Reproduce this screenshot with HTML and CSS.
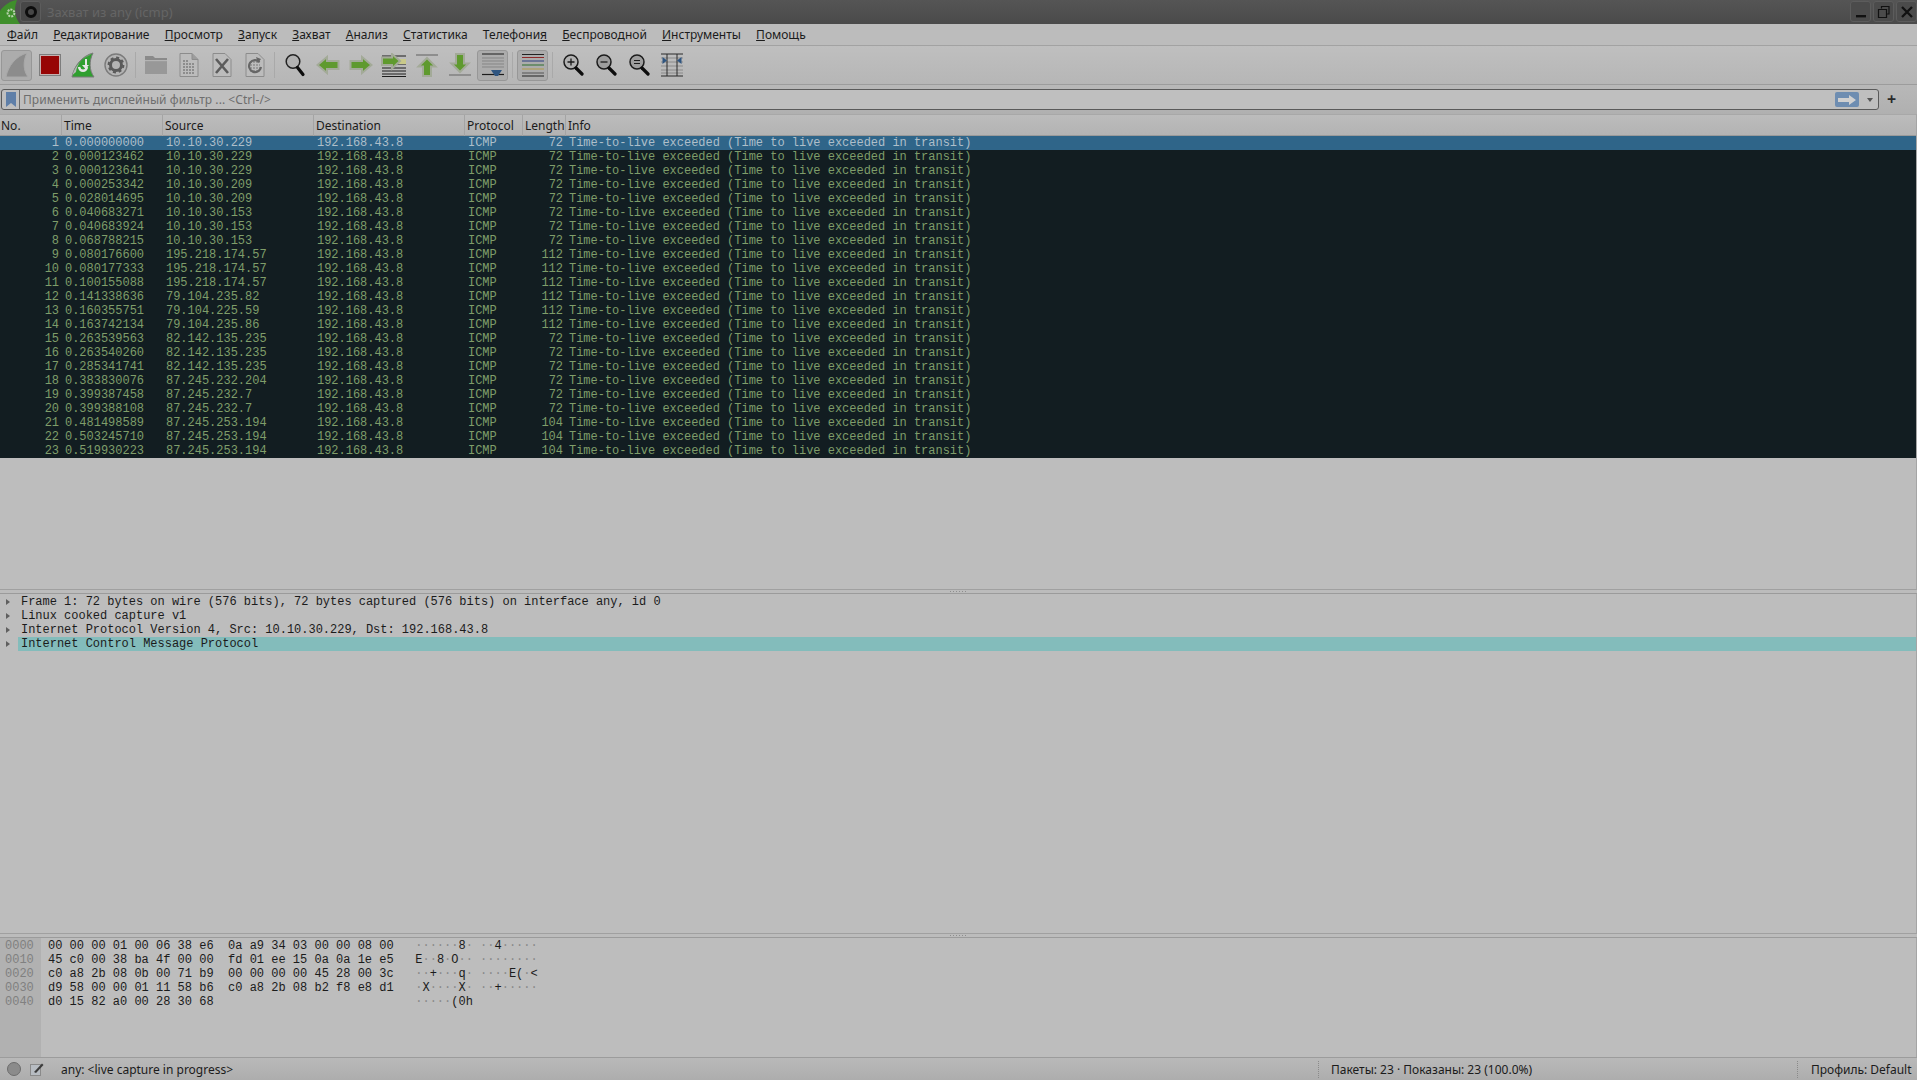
FILE: index.html
```html
<!DOCTYPE html>
<html lang="ru">
<head>
    <meta charset="UTF-8">
    <title>Захват из any (icmp)</title>
    <link rel="stylesheet" href="styles.css">
</head>
<body>
    <div class="titlebar">
        <svg class="app-logo" width="20" height="24" viewBox="0 0 20 24">
            <path d="M0 24V11C4 5 10 1 17 0C14 8 14 16 20 24Z" fill="#3f8f2c"/>
            <circle cx="11" cy="13" r="3.4" fill="none" stroke="#b9d3ae" stroke-width="2" stroke-dasharray="2 1"/>
        </svg>
        <div class="title-pin">
            <svg width="14" height="14" viewBox="0 0 14 14"><circle cx="7" cy="7" r="4.5" fill="none" stroke="#0d0d0d" stroke-width="3"/></svg>
        </div>
        <div class="title-text">Захват из any (icmp)</div>
        <div class="win-btn">
            <svg width="14" height="14" viewBox="0 0 14 14"><rect x="2" y="10" width="10" height="2.4" fill="#111"/></svg>
        </div>
        <div class="win-btn">
            <svg width="14" height="14" viewBox="0 0 14 14"><path d="M4.5 3.5V1.5H12V9H9.5M1.5 4.5H9.5V12.5H1.5Z" fill="none" stroke="#111" stroke-width="1.2"/></svg>
        </div>
        <div class="win-btn">
            <svg width="14" height="14" viewBox="0 0 14 14"><path d="M2 2L12 12M12 2L2 12" stroke="#111" stroke-width="2.3"/></svg>
        </div>
    </div>

    <div class="menubar">
        <span class="menu-item"><u>Ф</u>айл</span>
        <span class="menu-item"><u>Р</u>едактирование</span>
        <span class="menu-item"><u>П</u>росмотр</span>
        <span class="menu-item"><u>З</u>апуск</span>
        <span class="menu-item"><u>З</u>ахват</span>
        <span class="menu-item"><u>А</u>нализ</span>
        <span class="menu-item"><u>С</u>татистика</span>
        <span class="menu-item">Телефони<u>я</u></span>
        <span class="menu-item"><u>Б</u>еспроводной</span>
        <span class="menu-item"><u>И</u>нструменты</span>
        <span class="menu-item"><u>П</u>омощь</span>
    </div>

    <div class="toolbar">
        <div class="tool-btn on">
            <svg width="24" height="26" viewBox="0 0 24 26"><path d="M1 25C3 14 11 4 22 1C18 9 18 18 23 25Z" fill="#8c8c8c" stroke="#a9a9a9"/></svg>
        </div>
        <div class="tool-btn">
            <svg width="22" height="22" viewBox="0 0 22 22"><rect x="0.5" y="0.5" width="21" height="21" fill="#c4b0b0" stroke="#7d7d7d"/><rect x="2" y="2" width="18" height="18" fill="#970505"/></svg>
        </div>
        <div class="tool-btn">
            <svg width="24" height="26" viewBox="0 0 24 26">
                <path d="M1 25C3 14 11 4 22 1C18 9 18 18 23 25Z" fill="#2f9f2f" stroke="#7a7a7a"/>
                <path d="M1.500 23C4 14 11 6 21 2C12 5 6 12 5 20Z" fill="#b5b5b5"/>
                <path d="M8 15C9 20 15 20 16 15" fill="none" stroke="#e6e6e6" stroke-width="2.4"/>
                <path d="M14 7V13H11L14.5 17L18 13H16V7Z" fill="#e6e6e6"/>
            </svg>
        </div>
        <div class="tool-btn">
            <svg width="24" height="24" viewBox="0 0 24 24">
                <circle cx="12" cy="12" r="11" fill="#b4b4b4" stroke="#7b7b7b" stroke-width="1.4"/>
                <circle cx="12" cy="12" r="5.5" fill="none" stroke="#5a5a5a" stroke-width="3"/>
                <circle cx="12" cy="12" r="7.4" fill="none" stroke="#5a5a5a" stroke-width="2" stroke-dasharray="3 2.8"/>
            </svg>
        </div>
        <div class="tool-sep"></div>
        <div class="tool-btn">
            <svg width="24" height="20" viewBox="0 0 24 20">
                <path d="M1 3V1H9L11 3H23V19H1Z" fill="#8a8a8a"/>
                <rect x="1" y="5" width="22" height="14" fill="#989898"/>
                <rect x="1" y="5" width="22" height="1.2" fill="#b4b4b4"/>
            </svg>
        </div>
        <div class="tool-btn">
            <svg width="20" height="24" viewBox="0 0 20 24">
                <path d="M1 .5H13L19 6.500V23.500H1Z" fill="#bcbcbc" stroke="#8c8c8c"/>
                <path d="M13 .5V6.500H19" fill="#9c9c9c" stroke="#8c8c8c"/>
                <path d="M4 8H10M4 11H15M4 14H15M4 17H15M4 20H15" stroke="#7e7e7e" stroke-width="1.5" stroke-dasharray="2 1"/>
            </svg>
        </div>
        <div class="tool-btn">
            <svg width="20" height="24" viewBox="0 0 20 24">
                <path d="M1 .5H13L19 6.500V23.500H1Z" fill="#bcbcbc" stroke="#8c8c8c"/>
                <path d="M4 6L16 20M16 6L4 20" stroke="#5c5c5c" stroke-width="2.6"/>
            </svg>
        </div>
        <div class="tool-btn">
            <svg width="20" height="24" viewBox="0 0 20 24">
                <path d="M1 .5H13L19 6.500V23.500H1Z" fill="#bcbcbc" stroke="#8c8c8c"/>
                <path d="M5 9H15M5 12H15M5 15H15M5 18H15" stroke="#8e8e8e" stroke-width="1.400" stroke-dasharray="2 1"/>
                <path d="M14.500 9A6 6 0 1 0 16 14" fill="none" stroke="#666" stroke-width="2.200"/>
                <path d="M11 4L16 6L13 10Z" fill="#666"/>
            </svg>
        </div>
        <div class="tool-sep"></div>
        <div class="tool-btn">
            <svg width="22" height="24" viewBox="0 0 22 24">
                <circle cx="9" cy="8.500" r="6.800" fill="#b2b2b2" stroke="#222" stroke-width="1.500"/>
                <path d="M13.500 14.500L19 21.500" stroke="#0d0d0d" stroke-width="3.200" stroke-linecap="round"/>
            </svg>
        </div>
        <div class="tool-btn">
            <svg width="24" height="20" viewBox="0 0 24 20"><path class="arrow" d="M1.500 10L11 2V6H22.500V14H11V18Z"/></svg>
        </div>
        <div class="tool-btn">
            <svg width="24" height="20" viewBox="0 0 24 20"><path class="arrow" d="M22.500 10L13 2V6H1.500V14H13V18Z"/></svg>
        </div>
        <div class="tool-btn">
            <svg width="26" height="24" viewBox="0 0 26 24">
                <path d="M1 3H25M1 7H25M1 11H25M1 15H25M1 18H25M1 21H25M1 23.500H25" stroke="#1c1c1c" stroke-width="1"/>
                <rect x="16" y="6" width="9" height="5" fill="#c9c98a"/>
                <path class="arrow" d="M19 8L11 1V4.500H1V12H11V15.500Z"/>
            </svg>
        </div>
        <div class="tool-btn">
            <svg width="22" height="24" viewBox="0 0 22 24">
                <rect x="0" y="1" width="22" height="2" fill="#8e8e8e"/>
                <path class="arrow" d="M11 5L19.500 13.500H15V23H7V13.500H2.500Z"/>
            </svg>
        </div>
        <div class="tool-btn">
            <svg width="22" height="24" viewBox="0 0 22 24">
                <rect x="0" y="21" width="22" height="2" fill="#8e8e8e"/>
                <path class="arrow" d="M11 19L19.500 10.500H15V1H7V10.500H2.500Z"/>
            </svg>
        </div>
        <div class="tool-btn on">
            <svg width="24" height="24" viewBox="0 0 24 24">
                <path d="M1 1H23" stroke="#1c1c1c"/>
                <path d="M1 5H23M1 8H23M1 11H23M1 14H23" stroke="#858585"/>
                <path d="M1 21.500H23" stroke="#1c1c1c" stroke-width="1.200"/>
                <path d="M10 17H21L17 23H14Z" fill="#2f5580"/>
            </svg>
        </div>
        <div class="tool-sep"></div>
        <div class="tool-btn on">
            <svg width="24" height="24" viewBox="0 0 24 24">
                <path d="M1 1.500H23" stroke="#222"/>
                <path d="M1 4.500H23" stroke="#8e2a2a"/>
                <path d="M1 8H23" stroke="#2c3f80"/>
                <path d="M1 12H23" stroke="#2f6f2f"/>
                <path d="M1 16H23" stroke="#b09a4a"/>
                <path d="M1 20H23" stroke="#555"/>
                <path d="M1 23H23" stroke="#222"/>
            </svg>
        </div>
        <div class="tool-sep"></div>
        <div class="tool-btn">
            <svg width="22" height="24" viewBox="0 0 22 24">
                <circle cx="9" cy="9" r="7" fill="#b2b2b2" stroke="#1c1c1c" stroke-width="1.500"/>
                <path d="M5.500 9H12.500M9 5.500V12.500" stroke="#1c1c1c" stroke-width="1.300"/>
                <path d="M14 15L20 21" stroke="#0d0d0d" stroke-width="3.200" stroke-linecap="round"/>
            </svg>
        </div>
        <div class="tool-btn">
            <svg width="22" height="24" viewBox="0 0 22 24">
                <circle cx="9" cy="9" r="7" fill="#9e9e9e" stroke="#1c1c1c" stroke-width="1.500"/>
                <path d="M5.500 9H12.500" stroke="#1c1c1c" stroke-width="1.300"/>
                <path d="M14 15L20 21" stroke="#0d0d0d" stroke-width="3.200" stroke-linecap="round"/>
            </svg>
        </div>
        <div class="tool-btn">
            <svg width="22" height="24" viewBox="0 0 22 24">
                <circle cx="9" cy="9" r="7" fill="#9e9e9e" stroke="#1c1c1c" stroke-width="1.500"/>
                <path d="M6 7.500H12M6 10.500H12" stroke="#1c1c1c" stroke-width="1.200"/>
                <path d="M14 15L20 21" stroke="#0d0d0d" stroke-width="3.200" stroke-linecap="round"/>
            </svg>
        </div>
        <div class="tool-btn">
            <svg width="24" height="24" viewBox="0 0 24 24">
                <path d="M1 1H23M1 23H23" stroke="#2a2a2a"/>
                <path d="M1 5H23M1 9H23M1 13H23M1 17H23M1 20H23" stroke="#8a8a8a"/>
                <path d="M7 1V23M17 1V23" stroke="#2a2a2a"/>
                <path d="M2.500 4V11L7 7.500ZM21.500 4V11L17 7.500Z" fill="#2f5580"/>
            </svg>
        </div>
    </div>

    <div class="filterbar">
        <div class="filter-input">
            <div class="bookmark">
                <svg width="12" height="15" viewBox="0 0 12 15"><path d="M1 0H11V15L6 11L1 15Z" fill="#5f7fa8"/></svg>
            </div>
            <span class="filter-hint">Применить дисплейный фильтр ... &lt;Ctrl-/&gt;</span>
            <div class="filter-apply">
                <svg width="18" height="10" viewBox="0 0 18 10"><path d="M0 3H11V0L18 5L11 10V7H0Z" fill="#d0d0d0"/></svg>
            </div>
            <div class="filter-drop"></div>
        </div>
        <div class="filter-add">+</div>
    </div>

    <div class="packet-pane">
        <div class="packet-head">
            <span>No.</span>
            <span>Time</span>
            <span>Source</span>
            <span>Destination</span>
            <span>Protocol</span>
            <span>Length</span>
            <span>Info</span>
        </div>
        <div class="packet-row selected"><span>1</span><span>0.000000000</span><span>10.10.30.229</span><span>192.168.43.8</span><span>ICMP</span><span>72</span><span>Time-to-live exceeded (Time to live exceeded in transit)</span></div>
        <div class="packet-row"><span>2</span><span>0.000123462</span><span>10.10.30.229</span><span>192.168.43.8</span><span>ICMP</span><span>72</span><span>Time-to-live exceeded (Time to live exceeded in transit)</span></div>
        <div class="packet-row"><span>3</span><span>0.000123641</span><span>10.10.30.229</span><span>192.168.43.8</span><span>ICMP</span><span>72</span><span>Time-to-live exceeded (Time to live exceeded in transit)</span></div>
        <div class="packet-row"><span>4</span><span>0.000253342</span><span>10.10.30.209</span><span>192.168.43.8</span><span>ICMP</span><span>72</span><span>Time-to-live exceeded (Time to live exceeded in transit)</span></div>
        <div class="packet-row"><span>5</span><span>0.028014695</span><span>10.10.30.209</span><span>192.168.43.8</span><span>ICMP</span><span>72</span><span>Time-to-live exceeded (Time to live exceeded in transit)</span></div>
        <div class="packet-row"><span>6</span><span>0.040683271</span><span>10.10.30.153</span><span>192.168.43.8</span><span>ICMP</span><span>72</span><span>Time-to-live exceeded (Time to live exceeded in transit)</span></div>
        <div class="packet-row"><span>7</span><span>0.040683924</span><span>10.10.30.153</span><span>192.168.43.8</span><span>ICMP</span><span>72</span><span>Time-to-live exceeded (Time to live exceeded in transit)</span></div>
        <div class="packet-row"><span>8</span><span>0.068788215</span><span>10.10.30.153</span><span>192.168.43.8</span><span>ICMP</span><span>72</span><span>Time-to-live exceeded (Time to live exceeded in transit)</span></div>
        <div class="packet-row"><span>9</span><span>0.080176600</span><span>195.218.174.57</span><span>192.168.43.8</span><span>ICMP</span><span>112</span><span>Time-to-live exceeded (Time to live exceeded in transit)</span></div>
        <div class="packet-row"><span>10</span><span>0.080177333</span><span>195.218.174.57</span><span>192.168.43.8</span><span>ICMP</span><span>112</span><span>Time-to-live exceeded (Time to live exceeded in transit)</span></div>
        <div class="packet-row"><span>11</span><span>0.100155088</span><span>195.218.174.57</span><span>192.168.43.8</span><span>ICMP</span><span>112</span><span>Time-to-live exceeded (Time to live exceeded in transit)</span></div>
        <div class="packet-row"><span>12</span><span>0.141338636</span><span>79.104.235.82</span><span>192.168.43.8</span><span>ICMP</span><span>112</span><span>Time-to-live exceeded (Time to live exceeded in transit)</span></div>
        <div class="packet-row"><span>13</span><span>0.160355751</span><span>79.104.225.59</span><span>192.168.43.8</span><span>ICMP</span><span>112</span><span>Time-to-live exceeded (Time to live exceeded in transit)</span></div>
        <div class="packet-row"><span>14</span><span>0.163742134</span><span>79.104.235.86</span><span>192.168.43.8</span><span>ICMP</span><span>112</span><span>Time-to-live exceeded (Time to live exceeded in transit)</span></div>
        <div class="packet-row"><span>15</span><span>0.263539563</span><span>82.142.135.235</span><span>192.168.43.8</span><span>ICMP</span><span>72</span><span>Time-to-live exceeded (Time to live exceeded in transit)</span></div>
        <div class="packet-row"><span>16</span><span>0.263540260</span><span>82.142.135.235</span><span>192.168.43.8</span><span>ICMP</span><span>72</span><span>Time-to-live exceeded (Time to live exceeded in transit)</span></div>
        <div class="packet-row"><span>17</span><span>0.285341741</span><span>82.142.135.235</span><span>192.168.43.8</span><span>ICMP</span><span>72</span><span>Time-to-live exceeded (Time to live exceeded in transit)</span></div>
        <div class="packet-row"><span>18</span><span>0.383830076</span><span>87.245.232.204</span><span>192.168.43.8</span><span>ICMP</span><span>72</span><span>Time-to-live exceeded (Time to live exceeded in transit)</span></div>
        <div class="packet-row"><span>19</span><span>0.399387458</span><span>87.245.232.7</span><span>192.168.43.8</span><span>ICMP</span><span>72</span><span>Time-to-live exceeded (Time to live exceeded in transit)</span></div>
        <div class="packet-row"><span>20</span><span>0.399388108</span><span>87.245.232.7</span><span>192.168.43.8</span><span>ICMP</span><span>72</span><span>Time-to-live exceeded (Time to live exceeded in transit)</span></div>
        <div class="packet-row"><span>21</span><span>0.481498589</span><span>87.245.253.194</span><span>192.168.43.8</span><span>ICMP</span><span>104</span><span>Time-to-live exceeded (Time to live exceeded in transit)</span></div>
        <div class="packet-row"><span>22</span><span>0.503245710</span><span>87.245.253.194</span><span>192.168.43.8</span><span>ICMP</span><span>104</span><span>Time-to-live exceeded (Time to live exceeded in transit)</span></div>
        <div class="packet-row"><span>23</span><span>0.519930223</span><span>87.245.253.194</span><span>192.168.43.8</span><span>ICMP</span><span>104</span><span>Time-to-live exceeded (Time to live exceeded in transit)</span></div>
    </div>

    <div class="splitter"><i class="grip"></i></div>

    <div class="detail-pane">
        <div class="detail-row"><i class="expander"></i><span class="detail-text">Frame 1: 72 bytes on wire (576 bits), 72 bytes captured (576 bits) on interface any, id 0</span></div>
        <div class="detail-row"><i class="expander"></i><span class="detail-text">Linux cooked capture v1</span></div>
        <div class="detail-row"><i class="expander"></i><span class="detail-text">Internet Protocol Version 4, Src: 10.10.30.229, Dst: 192.168.43.8</span></div>
        <div class="detail-row"><i class="expander"></i><span class="detail-text marked">Internet Control Message Protocol</span></div>
    </div>

    <div class="splitter"><i class="grip"></i></div>

    <div class="hex-pane">
        <div class="hex-offsets">
            <div>0000</div>
            <div>0010</div>
            <div>0020</div>
            <div>0030</div>
            <div>0040</div>
        </div>
        <div class="hex-bytes">
            <div>00 00 00 01 00 06 38 e6  0a a9 34 03 00 00 08 00   <b>······</b>8<b>·</b> <b>··</b>4<b>·····</b></div>
            <div>45 c0 00 38 ba 4f 00 00  fd 01 ee 15 0a 0a 1e e5   E<b>··</b>8<b>·</b>O<b>··</b> <b>········</b></div>
            <div>c0 a8 2b 08 0b 00 71 b9  00 00 00 00 45 28 00 3c   <b>··</b>+<b>···</b>q<b>·</b> <b>····</b>E(<b>·</b>&lt;</div>
            <div>d9 58 00 00 01 11 58 b6  c0 a8 2b 08 b2 f8 e8 d1   <b>·</b>X<b>····</b>X<b>·</b> <b>··</b>+<b>·····</b></div>
            <div>d0 15 82 a0 00 28 30 68                            <b>·····</b>(0h</div>
        </div>
    </div>

    <div class="statusbar">
        <div class="status-main">
            <span class="status-led"></span>
            <svg class="status-note" width="14" height="14" viewBox="0 0 14 14">
                <rect x="0.500" y="2.500" width="10" height="11" fill="#b7bcc2" stroke="#8a8a8a"/>
                <path d="M4 10L12 1.500L13.500 3L6 11Z" fill="#3c3c3c"/>
            </svg>
            <span>any: &lt;live capture in progress&gt;</span>
        </div>
        <div class="status-packets">Пакеты: 23 · Показаны: 23 (100.0%)</div>
        <div class="status-profile">Профиль: Default</div>
    </div>
</body>
</html>
```

FILE: styles.css
```css
* {
    box-sizing: border-box;
}

body {
    margin: 0;
    height: 100vh;
    display: flex;
    flex-direction: column;
    overflow: hidden;
    background: #bdbdbd;
    color: #1b1b1b;
    font-family: "Noto Sans", sans-serif;
    font-size: 12px;
}

/* title bar */
.titlebar {
    height: 24px;
    display: flex;
    align-items: flex-start;
    background: linear-gradient(#555555, #4a4a4a);
}

.app-logo {
    flex: none;
}

.title-pin {
    width: 21px;
    height: 21px;
    margin: 1px 0 0 0;
    display: flex;
    align-items: center;
    justify-content: center;
    background: #474747;
    border: 1px solid #5c5c5c;
    border-radius: 3px;
}

.title-text {
    flex: 1;
    margin-left: 6px;
    line-height: 24px;
    font-size: 13px;
    color: #656565;
}

.win-btn {
    width: 21px;
    height: 21px;
    margin: 1px 2px 0 0;
    display: flex;
    align-items: center;
    justify-content: center;
    background: #4b4b4b;
    border: 1px solid #5c5c5c;
    border-radius: 3px;
}

.win-btn:last-child {
    margin-right: 0;
}

/* menu */
.menubar {
    height: 22px;
    padding-left: 7px;
    display: flex;
    align-items: center;
    gap: 15.2px;
    background: #bcbcbc;
    border-bottom: 1px solid #a2a2a2;
}

/* toolbar */
.toolbar {
    height: 39px;
    display: flex;
    align-items: center;
    background: linear-gradient(#bfbfbf, #b6b6b6);
    border-bottom: 1px solid #9c9c9c;
}

.tool-btn {
    width: 31px;
    height: 31px;
    margin: 0 1px;
    display: flex;
    align-items: center;
    justify-content: center;
    border: 1px solid transparent;
    border-radius: 3px;
}

.tool-btn.on {
    background: #acacac;
    border-color: #979797;
}

.tool-sep {
    width: 7px;
    height: 26px;
    background: linear-gradient(#a9a9a9, #a9a9a9) center / 1px 100% no-repeat;
}

.arrow {
    fill: #5f9a2e;
    stroke: #a3aa98;
    stroke-width: 2;
}

/* display filter */
.filterbar {
    height: 29px;
    padding: 4px 0 4px 1px;
    display: flex;
    align-items: flex-start;
    background: linear-gradient(#b8b8b8, #b0b0b0);
}

.filter-input {
    width: 1878px;
    height: 21px;
    display: flex;
    align-items: center;
    background: #bfbfbf;
    border: 1px solid #5a5a5a;
    border-radius: 3px;
}

.bookmark {
    width: 18px;
    height: 100%;
    display: flex;
    align-items: center;
    justify-content: center;
    border-right: 1px solid #6a6a6a;
}

.filter-hint {
    flex: 1;
    margin-left: 3px;
    letter-spacing: 0.06px;
    color: #6e6e6e;
}

.filter-apply {
    width: 24px;
    height: 15px;
    display: flex;
    align-items: center;
    justify-content: center;
    background: #6e8db1;
    border-radius: 2px;
}

.filter-drop {
    width: 0;
    height: 0;
    margin: 0 5px 0 8px;
    border-left: 3.5px solid transparent;
    border-right: 3.5px solid transparent;
    border-top: 4px solid #555555;
}

.filter-add {
    width: 25px;
    text-align: center;
    font-size: 16px;
    font-weight: 700;
    line-height: 21px;
    color: #2a2a2a;
}

/* packet list */
.packet-pane {
    height: 475px;
    background: #bdbdbd;
    border-right: 1px solid #a5a5a5;
}

.packet-head,
.packet-row {
    display: grid;
    grid-template-columns: 62px 101px 151px 151px 58px 43px 1fr;
}

.packet-head {
    height: 22px;
    line-height: 21px;
    background: linear-gradient(#bcbcbc, #b3b3b3);
    border-top: 1px solid #a8a8a8;
    border-bottom: 1px solid #9a9a9a;
}

.packet-head span {
    padding-left: 2px;
    border-right: 1px solid #a4a4a4;
}

.packet-head span:first-child {
    padding-left: 1px;
}

.packet-head span:last-child {
    border-right: 0;
}

.packet-row {
    height: 14px;
    line-height: 14px;
    font-family: "Liberation Mono", monospace;
    font-size: 12px;
    letter-spacing: -0.015px;
    white-space: pre;
    background: #121d21;
    color: #7f9d6a;
}

.packet-row span {
    padding-left: 3px;
}

.packet-row span:first-child,
.packet-row span:nth-child(6) {
    padding: 0 3px 0 0;
    text-align: right;
}

.packet-row.selected {
    background: #2f6589;
    color: #aebfca;
}

/* splitters between panes */
.splitter {
    height: 5px;
    display: flex;
    align-items: center;
    justify-content: center;
    background: #bcbcbc;
    border-top: 1px solid #a0a0a0;
    border-bottom: 1px solid #9b9b9b;
}

.grip {
    width: 18px;
    height: 1px;
    background: repeating-linear-gradient(90deg, #8d8d8d 0 1px, transparent 1px 3px);
}

/* packet details */
.detail-pane {
    flex: 1;
    padding-top: 1px;
    border-right: 1px solid #a5a5a5;
    font-family: "Liberation Mono", monospace;
    letter-spacing: -0.015px;
}

.detail-row {
    height: 14px;
    display: flex;
    align-items: center;
}

.expander {
    width: 0;
    height: 0;
    margin: 0 8px 0 6px;
    flex: none;
    border-top: 3.5px solid transparent;
    border-bottom: 3.5px solid transparent;
    border-left: 4px solid #5f5f5f;
}

.detail-text {
    flex: 1;
    padding-left: 3px;
    line-height: 14px;
    white-space: pre;
}

.detail-text.marked {
    background: #83bcbb;
}

/* packet bytes */
.hex-pane {
    height: 119px;
    display: flex;
    border-right: 1px solid #a5a5a5;
    font-family: "Liberation Mono", monospace;
    line-height: 14px;
}

.hex-offsets {
    width: 41px;
    padding: 1px 0 0 5px;
    background: #b1b1b1;
    color: #808080;
}

.hex-bytes {
    flex: 1;
    padding: 1px 0 0 7px;
}

.hex-bytes div {
    white-space: pre;
}

.hex-bytes b {
    font-weight: 400;
    color: #8a8a8a;
}

/* status bar */
.statusbar {
    height: 23px;
    display: flex;
    align-items: center;
    background: linear-gradient(#b9b9b9, #adadad);
    border-top: 1px solid #9c9c9c;
}

.status-main {
    flex: 1;
    padding-left: 7px;
    display: flex;
    align-items: center;
}

.status-led {
    width: 14px;
    height: 14px;
    border-radius: 50%;
    background: #8b8b8b;
    border: 1px solid #6c6c6c;
}

.status-note {
    margin: 0 17px 0 9px;
}

.status-packets {
    width: 479px;
    padding-left: 12px;
    border-left: 1px dotted #8a8a8a;
}

.status-profile {
    width: 120px;
    padding-left: 13px;
    border-left: 1px dotted #8a8a8a;
    white-space: nowrap;
}
```
